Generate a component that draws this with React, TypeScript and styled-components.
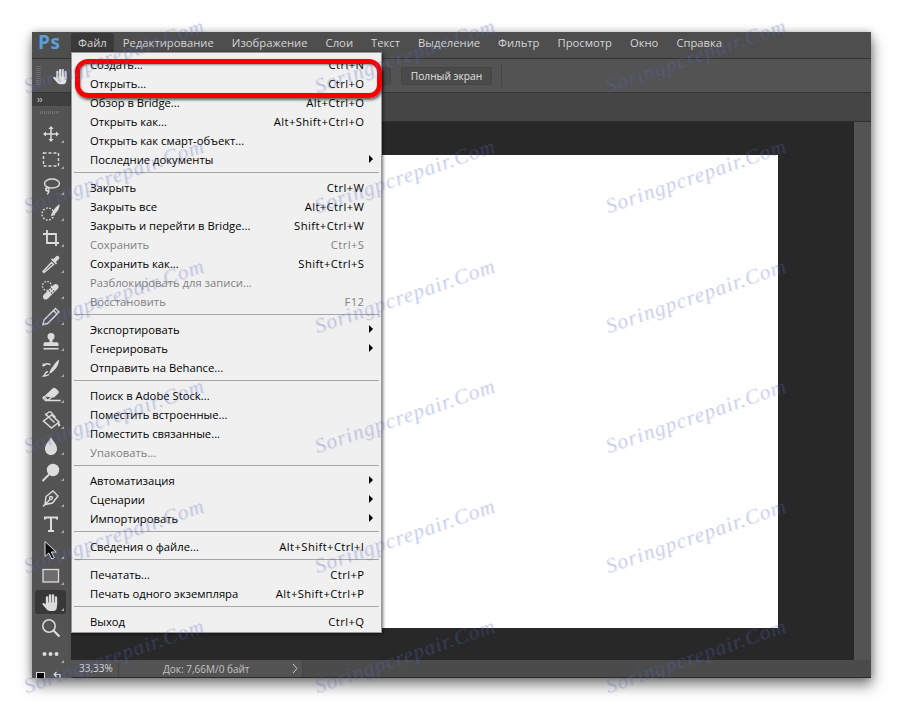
import React from "react";
import styled, { createGlobalStyle } from "styled-components";

const Global = createGlobalStyle`
  html, body { margin: 0; padding: 0; background: #fff; }
  #root { width: 903px; height: 710px; overflow: hidden; position: relative; }
`;

const UI_FONT = `"Open Sans", "Noto Sans", "Liberation Sans", sans-serif`;

const Page = styled.div`
  width: 903px;
  height: 710px;
  padding: 32px 32px 0;
  box-sizing: border-box;
  background: #fff;
  font-family: ${UI_FONT};
  font-size: 11.25px;
`;

const Win = styled.div`
  position: relative;
  width: 839px;
  height: 646px;
  display: flex;
  flex-direction: column;
  background: #535353;
  box-shadow: 1px 7px 13px rgba(0, 0, 0, 0.5), 0 0 7px rgba(0, 0, 0, 0.22);
`;

const MenuBar = styled.div`
  height: 26px;
  flex: none;
  display: flex;
  align-items: center;
  background: #4e4e4e;
  border-bottom: 1px solid #343434;
  color: #d6d6d6;
`;

const Logo = styled.div`
  width: 39px;
  padding-left: 6px;
  box-sizing: border-box;
  font-size: 19px;
  font-weight: 700;
  line-height: 20px;
  color: #5a9fd8;
  letter-spacing: 0.5px;
  margin-top: -7px;
`;

const MenuEntries = styled.div`
  display: flex;
  align-items: center;
  gap: 18px;
  height: 20px;
  margin-top: -5px;
`;

const MenuEntry = styled.div<{ $active?: boolean }>`
  line-height: 20px;
  height: 20px;
  white-space: nowrap;
  ${(p) =>
    p.$active
      ? `background:#3a3a3a; padding: 0 7px; margin-right: -9px; border-radius: 2px 2px 0 0;`
      : ""}
`;

const OptionsBar = styled.div`
  height: 33px;
  flex: none;
  display: flex;
  align-items: center;
  background: #535353;
  border-bottom: 1px solid #353535;
`;

const Grip = styled.div`
  width: 5px;
  height: 20px;
  margin-left: 4px;
  background: repeating-linear-gradient(180deg, #6a6a6a 0 1px, transparent 1px 2px);
`;

const OptionsHand = styled.div`
  margin-left: 10px;
  width: 20px;
  height: 20px;
  color: #e4e4e4;
  svg { display: block; }
`;

const OptButtons = styled.div`
  display: flex;
  gap: 10px;
  margin-left: 229px;
`;

const OptButton = styled.div`
  width: 91px;
  height: 18px;
  box-sizing: border-box;
  border: 1px solid #444;
  border-radius: 2px;
  background: #4a4a4a;
  color: #e2e2e2;
  font-size: 10.2px;
  line-height: 16px;
  text-align: center;
  white-space: nowrap;
  overflow: hidden;
`;

const OptSep = styled.div`
  width: 1px;
  height: 23px;
  margin-left: 9px;
  background: #444;
`;

const Body = styled.div`
  flex: 1;
  min-height: 0;
  display: flex;
`;

const ToolBar = styled.div`
  width: 39px;
  flex: none;
  display: flex;
  flex-direction: column;
  overflow: hidden;
  background: #535353;
`;

const ToolHead = styled.div`
  height: 13px;
  flex: none;
  background: #3f3f3f;
  color: #d0d0d0;
  font-size: 10px;
  line-height: 12px;
  padding-left: 5px;
  letter-spacing: -0.5px;
`;

const ToolGrip = styled.div`
  height: 3px;
  flex: none;
  margin: 5px 12px 7px 8px;
  background: repeating-linear-gradient(90deg, #707070 0 1px, transparent 1px 2px);
`;

const Tool = styled.div<{ $active?: boolean; $plain?: boolean }>`
  position: relative;
  height: 26px;
  flex: none;
  display: flex;
  align-items: center;
  justify-content: center;
  padding-right: 2px;
  box-sizing: border-box;
  color: #dcdcdc;
  &::before {
    content: "";
    position: absolute;
    left: 3px;
    top: 1px;
    width: 31px;
    height: 24px;
    border-radius: 3px;
    background: ${(p) => (p.$active ? "#383838" : "transparent")};
  }
  &::after {
    content: "";
    display: ${(p) => (p.$plain ? "none" : "block")};
    position: absolute;
    right: 7px;
    bottom: 4px;
    width: 0;
    height: 0;
    border-left: 3px solid transparent;
    border-bottom: 3px solid #a8a8a8;
  }
  svg { position: relative; display: block; }
`;

const Swatches = styled.div`
  position: relative;
  height: 20px;
  flex: none;
  margin-top: 4px;
  color: #dcdcdc;
  svg { display: block; margin-left: 2px; }
`;

const Workspace = styled.div`
  flex: 1;
  min-width: 0;
  display: flex;
  flex-direction: column;
`;

const TabStrip = styled.div`
  height: 28px;
  flex: none;
  background: #454545;
  border-bottom: 1px solid #2e2e2e;
`;

const CanvasRow = styled.div`
  flex: 1;
  min-height: 0;
  display: flex;
`;

const Canvas = styled.div`
  flex: 1;
  display: flex;
  align-items: center;
  justify-content: center;
  background: #282828;
`;

const Doc = styled.div`
  width: 631px;
  height: 473px;
  background: #fff;
`;

const ScrollGutter = styled.div`
  width: 17px;
  flex: none;
  background: #535353;
`;

const Status = styled.div`
  height: 17px;
  flex: none;
  display: flex;
  align-items: center;
  background: #4b4b4b;
  border-bottom: 1px solid #2a2a2a;
  color: #dadada;
  font-size: 10px;
`;

const ZoomValue = styled.div`
  width: 48px;
  height: 100%;
  box-sizing: border-box;
  padding-left: 8px;
  line-height: 16px;
  background: #535353;
  border-right: 1px solid #444;
`;

const DocInfo = styled.div`
  width: 184px;
  height: 100%;
  box-sizing: border-box;
  display: flex;
  align-items: center;
  justify-content: space-between;
  padding: 0 4px 0 44px;
  background: #535353;
  border-right: 1px solid #444;
  color: #c4c4c4;
  line-height: 16px;
  svg { display: block; }
`;

const Menu = styled.div`
  position: absolute;
  left: 39px;
  top: 20px;
  width: 311px;
  height: 581px;
  box-sizing: border-box;
  padding: 3px 0 2px;
  background: #f0f0f0;
  border: 1px solid #979797;
  box-shadow: 1px 1px 3px rgba(0, 0, 0, 0.55);
  color: #000;
`;

const Row = styled.div<{ $disabled?: boolean }>`
  position: relative;
  height: 19px;
  line-height: 18px;
  padding: 0 17px 0 18px;
  display: flex;
  justify-content: space-between;
  white-space: nowrap;
  color: ${(p) => (p.$disabled ? "#808080" : "#000")};
`;

const Shortcut = styled.span`
  letter-spacing: 0.4px;
  margin-right: -0.4px;
`;

const Arrow = styled.span`
  position: absolute;
  right: 8px;
  top: 4px;
  width: 0;
  height: 0;
  border-left: 4px solid #000;
  border-top: 4px solid transparent;
  border-bottom: 4px solid transparent;
`;

const Sep = styled.div`
  height: 1px;
  margin: 2px 2px 6px 2px;
  background: #a6a6a6;
`;

const Highlight = styled.div`
  position: absolute;
  left: 43px;
  top: 27px;
  width: 307px;
  height: 39px;
  box-sizing: border-box;
  border: 5px solid #f40000;
  border-radius: 13px;
  box-shadow: 1px 2px 3px rgba(0, 0, 0, 0.6), inset 1px 1px 2px rgba(0, 0, 0, 0.4);
`;

const Marks = styled.div`
  position: absolute;
  left: 0;
  top: -22px;
  width: 903px;
  height: 732px;
  overflow: hidden;
  pointer-events: none;
  display: grid;
  grid-template-columns: repeat(3, 291px);
  grid-auto-rows: 120px;
  padding: 0 0 0 28px;
  box-sizing: border-box;
`;

const Mark = styled.div`
  align-self: end;
  height: 24px;
  line-height: 24px;
  white-space: nowrap;
  transform-origin: 0 100%;
  transform: rotate(-19deg);
  font-family: "Liberation Serif", serif;
  font-style: italic;
  font-size: 21px;
  letter-spacing: 1.1px;
  color: rgba(88, 108, 190, 0.26);
  text-shadow: 1px 1px 1px rgba(88, 108, 190, 0.12);
`;

const Hand = ({ size = 22 }: { size?: number }) => (
  <svg width={size} height={size} viewBox="0 0 22 22" fill="none" stroke="currentColor" strokeLinecap="round">
    <path d="M7 13V6.500M10 12V4.500M13 12V4.500M16 13V6.500" strokeWidth="2.400" />
    <path d="M6 11.500h11.200l-.4 5.500c-.3 1.800-1.600 3-3.600 3H10c-1.600 0-2.700-.7-3.600-2L2.600 13.600c-.8-1.100.6-2.200 1.600-1.400L6 13.600z" fill="currentColor" stroke="none" />
  </svg>
);

const S = ({ children }: { children: React.ReactNode }) => (
  <svg width="22" height="22" viewBox="0 0 22 22" fill="none" stroke="currentColor" strokeWidth="1.3">
    {children}
  </svg>
);

const tools: { key: string; active?: boolean; plain?: boolean; icon: React.ReactNode }[] = [
  { key: "move", icon: <S><path d="M11 4v14M4 11h14" strokeWidth="1.500" /><path d="M11 3l2.600 3h-5.200zM11 19l2.600-3h-5.200zM3 11l3-2.600v5.200zM19 11l-3-2.600v5.200z" fill="currentColor" stroke="none" /></S> },
  { key: "marquee", icon: <S><rect x="3.500" y="4" width="15" height="13" strokeDasharray="3 2" strokeWidth="1.400" /></S> },
  { key: "lasso", icon: <S><ellipse cx="12" cy="8.500" rx="7.500" ry="4.500" strokeWidth="1.400" /><path d="M7 12c-2 1.500-1.500 3.500.5 3.500s1.500 2.500-.5 3.500" strokeWidth="1.400" /><circle cx="7.500" cy="14.500" r="1.600" /></S> },
  { key: "quick", icon: <S><circle cx="8" cy="13" r="6" strokeDasharray="1.600 1.600" strokeWidth="1.500" /><path d="M19.500 3c.3 5-3.300 10-8.500 12.500 0-3.500 2-5 3.500-7.500 1.500-2 3-3.500 5-5z" fill="currentColor" stroke="none" /></S> },
  { key: "crop", icon: <S><path d="M7 3v13h12M3 7h13v12" strokeWidth="1.800" /></S> },
  { key: "dropper", icon: <S><path d="M4 19.500l-1-1 8.500-9 2 2z" strokeWidth="1.400" /><path d="M11 6.500l5 5 1-1.200-1-1.300 2.800-2.900c1-1.100.5-2-.1-2.700s-1.700-1-2.700 0L13.300 6.200 12 5.300z" fill="currentColor" stroke="none" /></S> },
  { key: "heal", icon: <S><path d="M4 15.500L13.500 6c1.400-1.400 3-1.400 4.200-.2 1.200 1.200 1.200 2.900-.2 4.200L8 19.500c-1.400 1.400-3 1.400-4.200.2-1.200-1.200-1.200-2.900.2-4.200z" fill="currentColor" stroke="none" /><path d="M9 11.500l1 1M11 9.500l1 1M11 13.500l1 1M13 11.500l1 1" stroke="#535353" strokeWidth="1.300" /><circle cx="7" cy="7" r="4.500" strokeDasharray="1.500 1.500" /></S> },
  { key: "pencil", icon: <S><path d="M3 19.500l1-4.500L15.500 3.500l3.500 3.500L7.500 18.500zM13.500 5.500l3.500 3.500" strokeWidth="1.400" /></S> },
  { key: "stamp", icon: <S><circle cx="11" cy="5.500" r="3.500" fill="currentColor" stroke="none" /><path d="M9.500 8h3v3.500h-3zM3.500 13c0-1.200.8-1.800 2-1.800h11c1.200 0 2 .6 2 1.800v2h-15z" fill="currentColor" stroke="none" /><path d="M3.500 17.700h15" strokeWidth="1.600" /></S> },
  { key: "history", icon: <S><path d="M19 2.500c.3 5-3.300 10.500-9.500 14.500 0-4 2.500-6 4-8.500 1.500-2.300 3.500-4.300 5.500-6z" fill="currentColor" stroke="none" /><path d="M2.500 9c2.500-2.500 5.500-2.700 8-1.200M9 17.500c-1.800 1-3.500 1.700-5.500 1.500 1.200-.8 1.800-2 2.300-3.500l2-1" strokeWidth="1.400" /><path d="M2.500 6l.5 3.500 3-1z" fill="currentColor" stroke="none" /></S> },
  { key: "eraser", icon: <S><path d="M4 13.500l8.500-8c1-1 2-1 3-.2l2.500 2.300c1 1 1 2.200 0 3.100l-4 3.800z" fill="currentColor" stroke="none" /><path d="M4 13.500l3.700 4h13M4 13.500l-1 1.400 2.500 2.600h2.200l6.300-5.600" strokeWidth="1.300" /></S> },
  { key: "fill", icon: <S><path d="M11.500 6L19 13l-7.500 6L3.500 12z" strokeWidth="1.500" /><path d="M5 4.500l9.500 9" strokeWidth="1.300" /><path d="M6 7c.8-2.500 2.500-4.500 5-4l4.500 5.500" strokeWidth="1.300" /><path d="M18.500 13.500c1.300 1 2.300 2.200 1.500 3.500-1 1-2.500.2-2.200-1.300z" fill="currentColor" stroke="none" /></S> },
  { key: "blur", icon: <S><path d="M11 2c1 3.500 6 6.500 6 12 0 3.300-2.700 6-6 6s-6-2.700-6-6c0-5.500 5-8.500 6-12z" fill="currentColor" stroke="none" /></S> },
  { key: "dodge", icon: <S><circle cx="13" cy="9" r="6.200" fill="currentColor" stroke="none" /><path d="M9 13.500l-6.500 6.500" strokeWidth="2" /></S> },
  { key: "pen", icon: <S><path d="M5 17.500L6 9.500 13 4l5 5-5.500 7z M5 17.500l5.500-5.500" strokeWidth="1.400" /><path d="M3 19.500l2-2" strokeWidth="1.400" /><circle cx="11" cy="11" r="1.500" /></S> },
  { key: "type", icon: <S><path d="M5 6.500V4.500h12v2M11 4.500v13M8 18h6" strokeWidth="2" /></S> },
  { key: "arrow", icon: <S><path d="M5 2.500v15l3.800-3.500 3 6 2.500-1.300-3-5.700h5z" fill="#0f0f0f" stroke="#dcdcdc" strokeWidth="1" /></S> },
  { key: "rect", icon: <S><rect x="3" y="4.500" width="15.500" height="12.500" fill="#6e6a6e" stroke="#dcdcdc" strokeWidth="1.300" /></S> },
  { key: "hand", active: true, icon: <Hand /> },
  { key: "zoom", plain: true, icon: <S><circle cx="9" cy="9" r="6.200" strokeWidth="1.500" /><path d="M13.500 13.500l6 6" strokeWidth="2.200" /></S> },
  { key: "more", icon: <S><circle cx="4.500" cy="11" r="2" fill="currentColor" stroke="none" /><circle cx="10.500" cy="11" r="2" fill="currentColor" stroke="none" /><circle cx="16.500" cy="11" r="2" fill="currentColor" stroke="none" /></S> },
];

type Item = { t: string; k?: string; d?: boolean; s?: boolean };
const groups: Item[][] = [
  [
    { t: "Создать...", k: "Ctrl+N" },
    { t: "Открыть...", k: "Ctrl+O" },
    { t: "Обзор в Bridge...", k: "Alt+Ctrl+O" },
    { t: "Открыть как...", k: "Alt+Shift+Ctrl+O" },
    { t: "Открыть как смарт-объект..." },
    { t: "Последние документы", s: true },
  ],
  [
    { t: "Закрыть", k: "Ctrl+W" },
    { t: "Закрыть все", k: "Alt+Ctrl+W" },
    { t: "Закрыть и перейти в Bridge...", k: "Shift+Ctrl+W" },
    { t: "Сохранить", k: "Ctrl+S", d: true },
    { t: "Сохранить как...", k: "Shift+Ctrl+S" },
    { t: "Разблокировать для записи...", d: true },
    { t: "Восстановить", k: "F12", d: true },
  ],
  [
    { t: "Экспортировать", s: true },
    { t: "Генерировать", s: true },
    { t: "Отправить на Behance..." },
  ],
  [
    { t: "Поиск в Adobe Stock..." },
    { t: "Поместить встроенные..." },
    { t: "Поместить связанные..." },
    { t: "Упаковать...", d: true },
  ],
  [
    { t: "Автоматизация", s: true },
    { t: "Сценарии", s: true },
    { t: "Импортировать", s: true },
  ],
  [{ t: "Сведения о файле...", k: "Alt+Shift+Ctrl+I" }],
  [
    { t: "Печатать...", k: "Ctrl+P" },
    { t: "Печать одного экземпляра", k: "Alt+Shift+Ctrl+P" },
  ],
  [{ t: "Выход", k: "Ctrl+Q" }],
];

const entries = ["Редактирование", "Изображение", "Слои", "Текст", "Выделение", "Фильтр", "Просмотр", "Окно", "Справка"];

export default function App() {
  return (
    <Page>
      <Global />
      <Win>
        <MenuBar>
          <Logo>Ps</Logo>
          <MenuEntries>
            <MenuEntry $active>Файл</MenuEntry>
            {entries.map((e) => (
              <MenuEntry key={e}>{e}</MenuEntry>
            ))}
          </MenuEntries>
        </MenuBar>
        <OptionsBar>
          <Grip />
          <OptionsHand>
            <Hand size={20} />
          </OptionsHand>
          <OptButtons>
            <OptButton />
            <OptButton>Полный экран</OptButton>
          </OptButtons>
          <OptSep />
        </OptionsBar>
        <Body>
          <ToolBar>
            <ToolHead>››</ToolHead>
            <ToolGrip />
            {tools.map((t) => (
              <Tool key={t.key} $active={t.active} $plain={t.plain}>
                {t.icon}
              </Tool>
            ))}
            <Swatches>
              <svg width="32" height="20" viewBox="0 0 32 20" fill="none" stroke="currentColor">
                <rect x="2.500" y="1.500" width="8" height="8" fill="#000" stroke="#ddd" />
                <path d="M20 3.500h6v5M20 3.500l2.500-2.500M20 3.500l2.500 2.500" strokeWidth="1.200" />
              </svg>
            </Swatches>
          </ToolBar>
          <Workspace>
            <TabStrip />
            <CanvasRow>
              <Canvas>
                <Doc />
              </Canvas>
              <ScrollGutter />
            </CanvasRow>
            <Status>
              <ZoomValue>33,33%</ZoomValue>
              <DocInfo>
                <span>Док: 7,66М/0 байт</span>
                <svg width="6" height="11" viewBox="0 0 6 11" fill="none" stroke="#c8c8c8" strokeWidth="1">
                  <path d="M1 1l4 4.500L1 10" />
                </svg>
              </DocInfo>
            </Status>
          </Workspace>
        </Body>
        <Menu>
          {groups.map((g, i) => (
            <React.Fragment key={i}>
              {i > 0 && <Sep />}
              {g.map((it) => (
                <Row key={it.t} $disabled={it.d}>
                  <span>{it.t}</span>
                  {it.k && <Shortcut>{it.k}</Shortcut>}
                  {it.s && <Arrow />}
                </Row>
              ))}
            </React.Fragment>
          ))}
        </Menu>
        <Highlight />
      </Win>
      <Marks>
        {Array.from({ length: 18 }).map((_, i) => (
          <Mark key={i}>Soringpcrepair.Com</Mark>
        ))}
      </Marks>
    </Page>
  );
}
